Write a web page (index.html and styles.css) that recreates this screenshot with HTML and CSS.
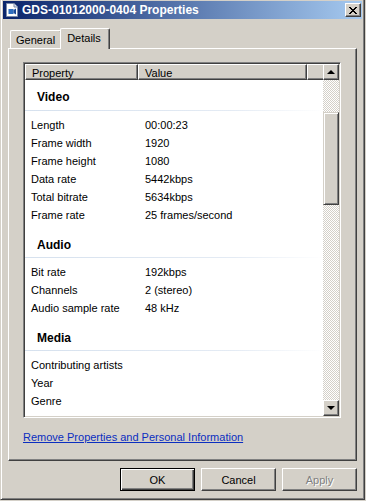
FILE: index.html
```html
<!DOCTYPE html>
<html>
<head>
    <title>GDS-01012000-0404 Properties</title>
    <link rel="stylesheet" href="styles.css">
</head>
<body>
    <div class="window">
        <div class="titlebar">
            <svg class="app-icon" width="12" height="14" viewBox="0 0 12 14">
                <path d="M0.5 0.5 H8 L11.5 4 V13.5 H0.5 Z" fill="#fff" stroke="#7a8aa8"/>
                <path d="M8 0.5 V4 H11.5" fill="#dfe6f2" stroke="#7a8aa8"/>
                <rect x="2.5" y="6" width="5" height="5" fill="#2f6fc0"/>
                <path d="M7.5 7 L10 5.5 V11.5 L7.5 10 Z" fill="#1a4a98"/>
            </svg>
            <span class="title">GDS-01012000-0404 Properties</span>
            <div class="close-btn">
                <svg width="8" height="7" viewBox="0 0 8 7">
                    <path d="M0 0h2v1h-2z M6 0h2v1h-2z M1 1h2v1h-2z M5 1h2v1h-2z M2 2h4v1h-4z M3 3h2v1h-2z M2 4h4v1h-4z M1 5h2v1h-2z M5 5h2v1h-2z M0 6h2v1h-2z M6 6h2v1h-2z" fill="#000"/>
                </svg>
            </div>
        </div>

        <div class="content">
            <div class="tabs">
                <div class="tab">General</div>
                <div class="tab active">Details</div>
            </div>

            <div class="panel">
                <div class="listbox">
                    <div class="list-main">
                        <div class="list-header">
                            <div class="hcell col-prop">Property</div>
                            <div class="hcell col-val">Value</div>
                            <div class="hcell col-fill"></div>
                        </div>
                        <div class="list-body">
                            <div class="group first"><span>Video</span></div>
                            <div class="row"><span class="prop">Length</span><span class="val">00:00:23</span></div>
                            <div class="row"><span class="prop">Frame width</span><span class="val">1920</span></div>
                            <div class="row"><span class="prop">Frame height</span><span class="val">1080</span></div>
                            <div class="row"><span class="prop">Data rate</span><span class="val">5442kbps</span></div>
                            <div class="row"><span class="prop">Total bitrate</span><span class="val">5634kbps</span></div>
                            <div class="row"><span class="prop">Frame rate</span><span class="val">25 frames/second</span></div>

                            <div class="group"><span>Audio</span></div>
                            <div class="row"><span class="prop">Bit rate</span><span class="val">192kbps</span></div>
                            <div class="row"><span class="prop">Channels</span><span class="val">2 (stereo)</span></div>
                            <div class="row"><span class="prop">Audio sample rate</span><span class="val">48 kHz</span></div>

                            <div class="group"><span>Media</span></div>
                            <div class="row"><span class="prop">Contributing artists</span><span class="val"></span></div>
                            <div class="row"><span class="prop">Year</span><span class="val"></span></div>
                            <div class="row"><span class="prop">Genre</span><span class="val"></span></div>
                        </div>
                    </div>
                    <div class="scrollbar">
                        <div class="sb-btn"><span class="arrow-up"></span></div>
                        <div class="sb-track"><div class="sb-thumb"></div></div>
                        <div class="sb-btn"><span class="arrow-down"></span></div>
                    </div>
                </div>

                <a class="remove-link" href="#">Remove Properties and Personal Information</a>
            </div>

            <div class="buttons">
                <button class="btn default">OK</button>
                <button class="btn">Cancel</button>
                <button class="btn" disabled>Apply</button>
            </div>
        </div>
    </div>
</body>
</html>
```

FILE: styles.css
```css
body {
    margin: 0;
    background-color: #d4d0c8;
    font-family: "Liberation Sans", Arial, sans-serif;
    font-size: 11px;
    color: #000;
}
.window {
    width: 365px;
    height: 500px;
    box-sizing: border-box;
    padding: 1px 2px 0 2px;
    border-left: 1px solid #d4d0c8;
    border-right: 1px solid #404040;
    border-bottom: 1px solid #404040;
    box-shadow: inset 1px 0 #fff, inset -1px -1px #808080;
    background: #d4d0c8;
}
.titlebar {
    height: 18px;
    display: flex;
    align-items: center;
    padding: 0 1px 0 3px;
    background: linear-gradient(to right, #0a246a, #a6caf0);
}
.app-icon {
    flex: none;
}
.title {
    flex: 1;
    margin-left: 4px;
    color: #fff;
    font-weight: bold;
    font-size: 12px;
}
.close-btn {
    width: 16px;
    height: 14px;
    box-sizing: border-box;
    display: flex;
    align-items: center;
    justify-content: center;
    background: #d4d0c8;
    border: 1px solid;
    border-color: #fff #404040 #404040 #fff;
    box-shadow: inset -1px -1px #808080;
}

.content {
    padding: 9px 5px 0 5px;
}
.tabs {
    display: flex;
    align-items: flex-end;
    height: 20px;
    padding-left: 2px;
}
.tab {
    height: 18px;
    box-sizing: border-box;
    padding: 3px 6px 0 5px;
    border-top: 1px solid #fff;
    border-left: 1px solid #fff;
    border-right: 1px solid #404040;
    box-shadow: inset -1px 0 #808080;
    border-radius: 2px 2px 0 0;
    background: #d4d0c8;
}
.tab.active {
    position: relative;
    z-index: 1;
    height: 21px;
    margin: 0 0 -1px -2px;
    padding: 3px 8px 0 6px;
}

.panel {
    height: 413px;
    box-sizing: border-box;
    padding: 13px 0 0 14px;
    border: 1px solid;
    border-color: #fff #404040 #404040 #fff;
    box-shadow: inset -1px -1px #808080;
}
.listbox {
    width: 318px;
    height: 356px;
    box-sizing: border-box;
    display: flex;
    background: #fff;
    border: 1px solid;
    border-color: #808080 #fff #fff #808080;
    box-shadow: inset 1px 1px #404040, inset -1px -1px #d4d0c8;
    padding: 1px;
}
.list-main {
    flex: 1;
    overflow: hidden;
}
.list-header {
    display: flex;
    height: 16px;
}
.hcell {
    box-sizing: border-box;
    height: 16px;
    padding: 2px 0 0 6px;
    background: #d4d0c8;
    border: 1px solid;
    border-color: #fff #404040 #404040 #fff;
    box-shadow: inset -1px -1px #808080;
}
.col-prop {
    width: 113px;
}
.col-val {
    width: 169px;
}
.col-fill {
    flex: 1;
    border-right: none;
    box-shadow: inset 0 -1px #808080;
}
.group {
    height: 34px;
    box-sizing: border-box;
    padding: 14px 0 0 12px;
    margin-bottom: 5px;
    font-weight: bold;
    font-size: 12px;
    border-bottom: 1px solid;
    border-image: linear-gradient(to right, #d6e1ee, #e4ebf4 70%, #fff) 1;
}
.group.first {
    height: 31px;
    padding-top: 10px;
    margin-bottom: 5px;
}
.row {
    display: flex;
    height: 18px;
    align-items: center;
}
.prop {
    width: 107px;
    padding-left: 6px;
}
.val {
    padding-left: 7px;
}

.scrollbar {
    width: 16px;
    display: flex;
    flex-direction: column;
}
.sb-btn {
    height: 16px;
    box-sizing: border-box;
    display: flex;
    align-items: center;
    justify-content: center;
    background: #d4d0c8;
    border: 1px solid;
    border-color: #fff #404040 #404040 #fff;
    box-shadow: inset -1px -1px #808080;
}
.arrow-up, .arrow-down {
    width: 0;
    height: 0;
    border-left: 4px solid transparent;
    border-right: 4px solid transparent;
}
.arrow-up {
    border-bottom: 4px solid #000;
}
.arrow-down {
    border-top: 4px solid #000;
}
.sb-track {
    flex: 1;
    padding-top: 32px;
    background: repeating-conic-gradient(#d4d0c8 0 25%, #fff 0 50%) 0 0 / 2px 2px;
}
.sb-thumb {
    height: 93px;
    box-sizing: border-box;
    background: #d4d0c8;
    border: 1px solid;
    border-color: #d4d0c8 #404040 #404040 #d4d0c8;
    box-shadow: inset 1px 1px #fff, inset -1px -1px #808080;
}

.remove-link {
    display: block;
    margin-top: 12px;
    line-height: 14px;
    color: #0b2ec0;
    text-decoration: underline;
    width: max-content;
}

.buttons {
    display: flex;
    justify-content: flex-end;
    gap: 6px;
    margin-top: 7px;
}
.btn {
    width: 75px;
    height: 23px;
    padding: 0;
    font-family: "Liberation Sans", Arial, sans-serif;
    font-size: 11px;
    color: #000;
    background: #d4d0c8;
    border: 1px solid;
    border-color: #fff #404040 #404040 #fff;
    box-shadow: inset -1px -1px #808080;
    border-radius: 0;
}
.btn.default {
    border-color: #000;
    box-shadow: inset 1px 1px #fff, inset -1px -1px #404040, inset -2px -2px #808080;
}
.btn:disabled {
    color: #808080;
    text-shadow: 1px 1px #fff;
}
```
